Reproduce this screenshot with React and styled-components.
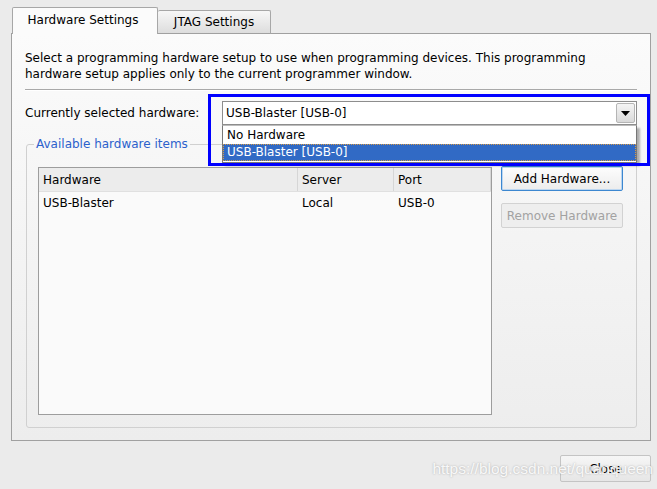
import styled, { createGlobalStyle } from "styled-components";

const GlobalStyle = createGlobalStyle`
  html, body {
    margin: 0;
    padding: 0;
    background: #ebebeb;
  }
  body {
    font-family: "DejaVu Sans", Verdana, sans-serif;
    font-size: 12px;
    color: #000;
  }
`;

const columns = [
  { key: "hardware", title: "Hardware", width: 259 },
  { key: "server", title: "Server", width: 96 },
  { key: "port", title: "Port", width: 97 },
];

const rows = [{ hardware: "USB-Blaster", server: "Local", port: "USB-0" }];

export default function App() {
  return (
    <Window>
      <GlobalStyle />
      <TabBar>
        <Tab $active $width={146}>Hardware Settings</Tab>
        <Tab $width={113}>JTAG Settings</Tab>
      </TabBar>
      <Panel>
        <Description>
          Select a programming hardware setup to use when programming devices. This programming
          <br />
          hardware setup applies only to the current programmer window.
        </Description>
        <Separator />
        <HardwareRow>
          <Label>Currently selected hardware:</Label>
          <ComboWrap>
            <Combo>
              <ComboText>USB-Blaster [USB-0]</ComboText>
              <ArrowButton>
                <svg width="9" height="5" viewBox="0 0 9 5">
                  <path d="M0 0 H9 L4.5 5 Z" fill="#000" />
                </svg>
              </ArrowButton>
            </Combo>
            <DropList>
              <DropItem>No Hardware</DropItem>
              <DropItem $selected>USB-Blaster [USB-0]</DropItem>
            </DropList>
            <Highlight />
          </ComboWrap>
        </HardwareRow>
        <Group>
          <Legend>Available hardware items</Legend>
          <GroupBody>
            <Table>
              <HeaderRow>
                {columns.map((c) => (
                  <HeaderCell key={c.key} style={{ width: c.width }}>{c.title}</HeaderCell>
                ))}
              </HeaderRow>
              {rows.map((r) => (
                <BodyRow key={r.hardware}>
                  {columns.map((c) => (
                    <BodyCell key={c.key} style={{ width: c.width }}>{r[c.key]}</BodyCell>
                  ))}
                </BodyRow>
              ))}
            </Table>
            <ButtonColumn>
              <Button $focused>Add Hardware...</Button>
              <Button disabled>Remove Hardware</Button>
            </ButtonColumn>
          </GroupBody>
        </Group>
      </Panel>
      <Footer>
        <CloseButton>Close</CloseButton>
        <Watermark>https://blog.csdn.net/quanqueen</Watermark>
      </Footer>
    </Window>
  );
}

const Window = styled.div`
  width: 657px;
  height: 489px;
  box-sizing: border-box;
  padding: 8px 6px 0 11px;
  display: flex;
  flex-direction: column;
  position: relative;
  overflow: hidden;
`;

const TabBar = styled.div`
  display: flex;
  align-items: flex-end;
  height: 26px;
  padding-left: 1px;
  margin-bottom: -1px;
  position: relative;
  z-index: 1;
`;

const Tab = styled.div`
  box-sizing: border-box;
  width: ${(p) => p.$width}px;
  height: ${(p) => (p.$active ? "27px" : "24px")};
  display: flex;
  align-items: center;
  justify-content: center;
  padding-bottom: ${(p) => (p.$active ? "2px" : "0")};
  padding-right: ${(p) => (p.$active ? "4px" : "0")};
  border: 1px solid #a7a7a7;
  border-bottom: ${(p) => (p.$active ? "none" : "1px solid #a0a0a0")};
  border-left: ${(p) => (p.$active ? "1px solid #a7a7a7" : "none")};
  border-radius: 2px 2px 0 0;
  white-space: nowrap;
  background: ${(p) =>
    p.$active ? "#fbfbfb" : "linear-gradient(#f7f7f7, #dddddd)"};
`;

const Panel = styled.div`
  box-sizing: border-box;
  width: 640px;
  height: 408px;
  border: 1px solid #a0a0a0;
  background: linear-gradient(#fbfbfb, #ededed);
  padding: 16px 13px 13px 13px;
  display: flex;
  flex-direction: column;
`;

const Description = styled.div`
  line-height: 16px;
  white-space: nowrap;
`;

const Separator = styled.div`
  margin-top: 7px;
  height: 0;
  border-top: 1px solid #a9a9a9;
  border-bottom: 1px solid #ffffff;
`;

const HardwareRow = styled.div`
  display: grid;
  grid-template-columns: 197px 1fr;
  align-items: center;
  margin-top: 10px;
  height: 24px;
`;

const Label = styled.div`
  white-space: nowrap;
`;

const ComboWrap = styled.div`
  position: relative;
  height: 24px;
`;

const Combo = styled.div`
  box-sizing: border-box;
  height: 24px;
  border: 1px solid #8d8d8d;
  background: #fff;
  display: flex;
  align-items: center;
  justify-content: space-between;
  padding: 0 1px 0 3px;
`;

const ComboText = styled.span`
  white-space: nowrap;
`;

const ArrowButton = styled.div`
  box-sizing: border-box;
  width: 19px;
  height: 20px;
  border: 1px solid #b5b5b5;
  border-radius: 2px;
  background: linear-gradient(#f4f4f4, #d9d9d9);
  display: flex;
  align-items: center;
  justify-content: center;
`;

const DropList = styled.div`
  position: absolute;
  left: 0;
  top: 24px;
  width: 415px;
  box-sizing: border-box;
  border: 1px solid #777;
  border-top-color: #bdbdbd;
  background: #fff;
  box-shadow: 3px 3px 2px rgba(0, 0, 0, 0.3);
  padding: 1px 0;
  z-index: 5;
`;

const DropItem = styled.div`
  box-sizing: border-box;
  height: 17px;
  line-height: 15px;
  padding: 0 3px;
  white-space: nowrap;
  background: ${(p) => (p.$selected ? "#316ac5" : "transparent")};
  color: ${(p) => (p.$selected ? "#fff" : "#000")};
  border: 1px ${(p) => (p.$selected ? "dotted #d89a45" : "solid transparent")};
`;

const Highlight = styled.div`
  position: absolute;
  left: -14px;
  top: -7px;
  width: 442px;
  height: 72px;
  box-sizing: border-box;
  border: 3px solid #0000ff;
  z-index: 6;
  pointer-events: none;
`;

const Group = styled.fieldset`
  margin: 11px 0 0 1px;
  padding: 0 13px 12px 11px;
  border: 1px solid #d0d0d0;
  border-radius: 3px;
  flex: 1;
  min-width: 0;
  display: flex;
  flex-direction: column;
`;

const Legend = styled.legend`
  color: #2c61cc;
  padding: 0 2px;
  margin-left: -4px;
  line-height: 16px;
`;

const GroupBody = styled.div`
  flex: 1;
  display: flex;
  align-items: flex-start;
  gap: 9px;
  margin-top: 15px;
`;

const Table = styled.div`
  box-sizing: border-box;
  width: 454px;
  height: 248px;
  border: 1px solid #9d9d9d;
  background: #fafafa;
`;

const HeaderRow = styled.div`
  display: flex;
  height: 23px;
  background: #ececec;
  border-bottom: 1px solid #e0e0e0;
`;

const HeaderCell = styled.div`
  box-sizing: border-box;
  padding-left: 4px;
  display: flex;
  align-items: center;
  border-right: 1px solid #d6d6d6;
`;

const BodyRow = styled.div`
  display: flex;
  height: 22px;
`;

const BodyCell = styled.div`
  box-sizing: border-box;
  padding-left: 4px;
  display: flex;
  align-items: center;
`;

const ButtonColumn = styled.div`
  display: flex;
  flex-direction: column;
  gap: 12px;
  margin-top: -1px;
`;

const Button = styled.button`
  box-sizing: border-box;
  width: 122px;
  height: 25px;
  font-family: inherit;
  font-size: 12px;
  padding: 0;
  border-radius: 2px;
  border: 1px solid ${(p) => (p.$focused ? "#3c87d0" : "#d2d2d2")};
  box-shadow: ${(p) => (p.$focused ? "inset 0 0 0 1px #bcd6f0" : "none")};
  background: ${(p) => (p.disabled ? "#eeeeee" : "linear-gradient(#fdfdfd, #ececec)")};
  color: ${(p) => (p.disabled ? "#a2a2a2" : "#000")};
  white-space: nowrap;
`;

const Footer = styled.div`
  display: flex;
  justify-content: flex-end;
  width: 640px;
  margin-top: 14px;
  position: relative;
`;

const CloseButton = styled.button`
  box-sizing: border-box;
  width: 91px;
  height: 27px;
  font-family: inherit;
  font-size: 12px;
  border: 1px solid #c4c4c4;
  border-radius: 2px;
  background: linear-gradient(#f6f6f6, #e6e6e6);
  color: #000;
`;

const Watermark = styled.div`
  position: absolute;
  right: -2px;
  top: 5px;
  font-family: "Liberation Sans", Arial, sans-serif;
  font-size: 15.5px;
  color: rgba(255, 255, 255, 0.9);
  text-shadow: 0 0 2px rgba(90, 90, 90, 0.45);
  white-space: nowrap;
  pointer-events: none;
`;
